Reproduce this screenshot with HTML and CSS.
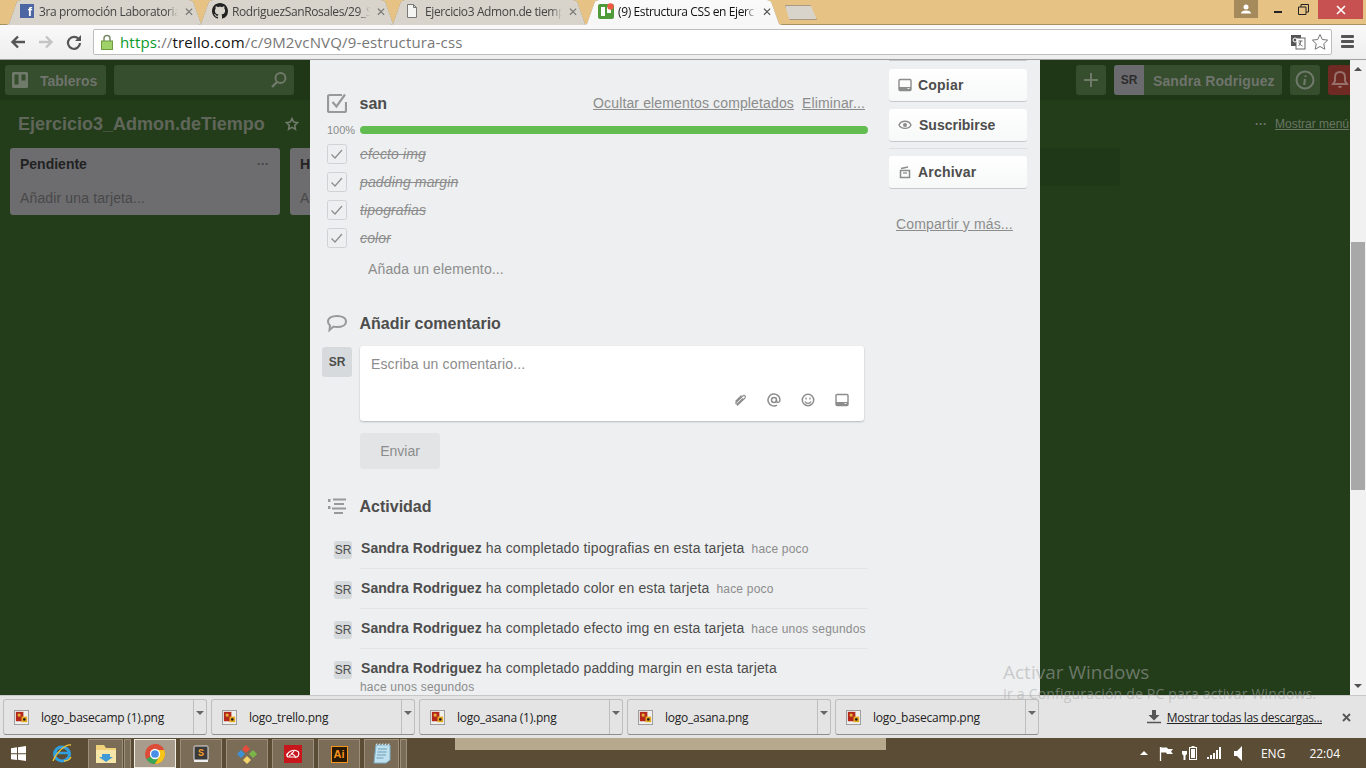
FILE: index.html
```html
<!DOCTYPE html>
<html lang="es">
<head>
<meta charset="utf-8">
<title>(9) Estructura CSS en Ejercicio3</title>
<link rel="stylesheet" href="styles.css">
</head>
<body>
<svg class="defs" width="0" height="0" aria-hidden="true">
  <symbol id="png" viewBox="0 0 16 16">
    <rect x=".5" y=".5" width="15" height="15" fill="#f0f0ec" stroke="#9a9a9a"/>
    <rect x="2" y="2" width="8" height="10" fill="#b3261a"/>
    <rect x="4" y="4" width="3" height="3" fill="#e8b23a"/>
    <rect x="8" y="7" width="6" height="6" fill="#e5a81e"/>
    <circle cx="11" cy="10" r="1.4" fill="#222"/>
  </symbol>
  <symbol id="card-icon" viewBox="0 0 14 14">
    <path d="M2 1.500h10a1 1 0 0 1 1 1v9a1 1 0 0 1-1 1H2a1 1 0 0 1-1-1v-9a1 1 0 0 1 1-1z" fill="none" stroke="#8c8c8c" stroke-width="1.400"/>
    <path d="M1 9h12v3H1z" fill="#8c8c8c"/>
    <path d="M9.500 10.500h2" stroke="#edeff0"/>
  </symbol>
  <symbol id="tick" viewBox="0 0 20 20">
    <rect x=".5" y=".5" width="19" height="19" rx="2" fill="#edeff0" stroke="#d0d3d6"/>
    <path d="M4.500 10.500l3.500 3.500 7-8" fill="none" stroke="#8c8c8c" stroke-width="1.200"/>
  </symbol>
</svg>

<header class="tabstrip">
  <div class="tab tab-fb">
    <span class="fb-logo">f</span>
    <span class="tab-title">3ra promoción Laboratoria</span>
    <span class="tab-x">✕</span>
  </div>
  <div class="tab tab-gh">
    <svg class="fav" viewBox="0 0 16 16"><path fill="#222" d="M8 0C3.580 0 0 3.580 0 8c0 3.540 2.290 6.530 5.470 7.590.4.070.55-.17.55-.38 0-.19-.01-.82-.01-1.490-2.010.37-2.530-.49-2.690-.94-.09-.23-.48-.94-.82-1.130-.28-.15-.68-.52-.01-.53.63-.01 1.080.58 1.230.82.720 1.210 1.870.87 2.330.66.070-.52.280-.87.510-1.070-1.780-.2-3.640-.89-3.640-3.950 0-.87.310-1.590.820-2.150-.08-.2-.36-1.020.080-2.120 0 0 .670-.21 2.200.82.640-.18 1.320-.27 2-.27.680 0 1.360.09 2 .27 1.530-1.040 2.200-.82 2.200-.82.440 1.100.160 1.920.080 2.120.510.560.820 1.270.820 2.150 0 3.070-1.870 3.750-3.650 3.950.290.25.540.73.540 1.480 0 1.070-.01 1.930-.01 2.200 0 .21.150.46.550.38A8.013 8.013 0 0 0 16 8c0-4.420-3.580-8-8-8z"/></svg>
    <span class="tab-title">RodriguezSanRosales/29_S</span>
    <span class="tab-x">✕</span>
  </div>
  <div class="tab tab-doc">
    <svg class="fav" viewBox="0 0 16 16"><path d="M3.500 1.500h6l3 3v10h-9z M9.500 1.500v3h3" fill="#f4f4f2" stroke="#777"/></svg>
    <span class="tab-title">Ejercicio3 Admon.de tiemp</span>
    <span class="tab-x">✕</span>
  </div>
  <div class="tab tab-active">
    <svg class="fav" viewBox="0 0 16 16"><rect y="1" width="16" height="15" rx="2" fill="#4f9a3a"/><rect x="3" y="4" width="4" height="9" fill="#fff"/><rect x="9" y="4" width="4" height="6" fill="#fff"/><circle cx="12.500" cy="3.500" r="3.200" fill="#ee5a44"/></svg>
    <span class="tab-title">(9) Estructura CSS en Ejerc</span>
    <span class="tab-x">✕</span>
  </div>
  <div class="new-tab"></div>
  <div class="win-controls">
    <div class="win-user"><svg width="10" height="10" viewBox="0 0 10 10"><circle cx="5" cy="3" r="2.500" fill="#fff"/><path d="M0 9.500c0-2 2-3 5-3s5 1 5 3z" fill="#fff"/></svg></div>
    <div class="win-min"><span class="min-bar"></span></div>
    <div class="win-max"><svg width="11" height="11" viewBox="0 0 11 11"><path d="M.5 3h7.500v7.500H.5zM3 3V.5h7.500V8H8" fill="none" stroke="#222"/></svg></div>
    <div class="win-close"><svg width="10" height="10" viewBox="0 0 10 10"><path d="M1 1l8 8M9 1l-8 8" stroke="#fff" stroke-width="1.600"/></svg></div>
  </div>
</header>

<nav class="toolbar">
  <svg class="nav-ic" viewBox="0 0 16 16"><path d="M15 8H3M8 2.500L2.500 8 8 13.500" fill="none" stroke="#555" stroke-width="2.400"/></svg>
  <svg class="nav-ic" viewBox="0 0 16 16"><path d="M1 8h12M8 2.500L13.500 8 8 13.500" fill="none" stroke="#c4c4c4" stroke-width="2.400"/></svg>
  <svg class="nav-ic" viewBox="0 0 16 16"><path d="M13 5.500A6 6 0 1 0 14 9" fill="none" stroke="#555" stroke-width="2.200"/><path d="M15 1v6H9z" fill="#555"/></svg>
  <div class="omnibox">
    <svg class="lock" viewBox="0 0 12 16"><path d="M3 7V4.500a3 3 0 0 1 6 0V7" fill="none" stroke="#7a8a6a" stroke-width="1.500"/><rect x=".5" y="7" width="11" height="8.500" fill="#9fd36a" stroke="#6f9a3f"/></svg>
    <span class="url"><span class="url-https">https</span><span class="url-rest">://</span><span class="url-host">trello.com</span><span class="url-rest">/c/9M2vcNVQ/9-estructura-css</span></span>
    <svg class="translate" viewBox="0 0 16 16"><rect x="1" y="1" width="10" height="11" fill="#555"/><rect x="6" y="4" width="9" height="11" fill="#fff" stroke="#666"/><path d="M8.500 7h4M10.500 7c0 3-1 4-2 5M9 8.500c.5 2 2 3 3.500 3.500" fill="none" stroke="#666"/><circle cx="5" cy="6" r="2" fill="none" stroke="#fff"/></svg>
    <svg class="star" viewBox="0 0 18 18"><path d="M9 1.500l2.300 5 5.400.6-4 3.700 1.100 5.400L9 13.500l-4.800 2.700 1.100-5.400-4-3.700 5.400-.6z" fill="#fff" stroke="#777"/></svg>
  </div>
  <div class="hamburger"><span></span><span></span><span></span></div>
</nav>

<main class="viewport">
  <div class="board">
    <div class="board-head">
      <div class="hbtn hbtn-boards">
        <svg width="16" height="16" viewBox="0 0 16 16"><path fill="#6f7a6a" fill-rule="evenodd" d="M1.500 0h13A1.500 1.500 0 0 1 16 1.500v13a1.500 1.500 0 0 1-1.500 1.500h-13A1.500 1.500 0 0 1 0 14.500v-13A1.500 1.500 0 0 1 1.500 0zM2.500 2.500v10h4v-10zM9.500 2.500v6h4v-6z"/></svg>
        <span class="htext">Tableros</span>
      </div>
      <div class="hsearch">
        <svg width="16" height="16" viewBox="0 0 16 16"><circle cx="9.500" cy="6" r="5" fill="none" stroke="#6f7a6a" stroke-width="2"/><path d="M6 10l-5 5" stroke="#6f7a6a" stroke-width="2.400"/></svg>
      </div>
      <div class="head-spacer"></div>
      <div class="hbtn hbtn-sq">
        <svg width="16" height="16" viewBox="0 0 16 16"><path d="M8 1v14M1 8h14" stroke="#6f7a6a" stroke-width="2"/></svg>
      </div>
      <div class="hbtn hbtn-user"><span class="huser-av">SR</span><span class="huser-name htext">Sandra Rodriguez</span></div>
      <div class="hbtn hbtn-sq">
        <svg width="20" height="20" viewBox="0 0 20 20"><circle cx="10" cy="10" r="8.500" fill="none" stroke="#6f7a6a" stroke-width="2"/><path d="M10.500 5.500v1.500M10 9l-.8 6" stroke="#6f7a6a" stroke-width="2.200"/></svg>
      </div>
      <div class="hbtn hbtn-bell">
        <svg width="20" height="20" viewBox="0 0 20 20"><path d="M10 2c-3 0-5 2-5 5v4l-2 3h14l-2-3V7c0-3-2-5-5-5z" fill="none" stroke="#98706a" stroke-width="2"/><path d="M8 16a2 2 0 0 0 4 0" fill="#98706a"/></svg>
      </div>
    </div>
    <div class="board-title-row">
      <span class="board-name">Ejercicio3_Admon.deTiempo</span>
      <svg class="board-star" width="14" height="14" viewBox="0 0 14 14"><path d="M7 1.500l1.700 3.600 3.800.5-2.800 2.700.7 3.900L7 10.400l-3.400 1.800.7-3.900L1.500 5.600l3.800-.5z" fill="none" stroke="#6f7a6a" stroke-width="1.600"/></svg>
      <div class="head-spacer"></div>
      <span class="menu-dots">···</span>
      <span class="menu-link">Mostrar menú</span>
    </div>
    <div class="lists">
      <section class="list">
        <div class="list-head"><span class="list-name">Pendiente</span><span class="list-dots">···</span></div>
        <div class="list-add">Añadir una tarjeta...</div>
      </section>
      <section class="list">
        <div class="list-head"><span class="list-name">H</span></div>
        <div class="list-add">A</div>
      </section>
      <section class="list"></section>
      <div class="list-new"></div>
    </div>
  </div>

  <div class="modal">
    <div class="modal-main">
      <div class="sec-head">
        <svg class="sec-ic" viewBox="0 0 20 20"><path d="M15 2H2.500A1.500 1.500 0 0 0 1 3.500v14A1.500 1.500 0 0 0 2.500 19h15a1.500 1.500 0 0 0 1.500-1.500V9" fill="none" stroke="#999" stroke-width="2.200"/><path d="M5.500 9l4 4.500L18 1.500" fill="none" stroke="#999" stroke-width="2.200"/></svg>
        <h3 class="sec-title">san</h3>
        <a class="head-link first-link">Ocultar elementos completados</a>
        <a class="head-link">Eliminar...</a>
      </div>
      <div class="progress">
        <span class="pct">100%</span>
        <div class="bar"></div>
      </div>
      <ul class="items">
        <li class="item"><svg class="tick"><use href="#tick"/></svg><span class="item-text">efecto img</span></li>
        <li class="item"><svg class="tick"><use href="#tick"/></svg><span class="item-text">padding margin</span></li>
        <li class="item"><svg class="tick"><use href="#tick"/></svg><span class="item-text">tipografias</span></li>
        <li class="item"><svg class="tick"><use href="#tick"/></svg><span class="item-text">color</span></li>
      </ul>
      <div class="add-item">Añada un elemento...</div>

      <div class="sec-head sec-comment">
        <svg class="sec-ic" viewBox="0 0 20 20"><path d="M10 3c5 0 9 2 9 5.500S15 14 10 14c-1.300 0-2.500-.1-3.500-.4L2.500 17l.5-4.500C1.700 11.500 1 10 1 8.500 1 5 5 3 10 3z" fill="none" stroke="#999" stroke-width="2"/></svg>
        <h3 class="sec-title">Añadir comentario</h3>
      </div>
      <div class="comment-row">
        <div class="avatar-lg">SR</div>
        <div class="comment-box">
          <div class="placeholder">Escriba un comentario...</div>
          <div class="comment-tools">
            <svg class="tool" viewBox="0 0 14 14"><path d="M4 12.500L12 5c1.200-1.300-.5-3.400-2-2.200L3 9.500c-.8.800.3 2 1.200 1.300L10 5.500M2.500 8.500L8.500 2.500" fill="none" stroke="#8c8c8c" stroke-width="1.100"/></svg>
            <svg class="tool" viewBox="0 0 14 14"><circle cx="7" cy="7" r="2.500" fill="none" stroke="#8c8c8c" stroke-width="1.500"/><path d="M9.500 7v1c0 2 3.500 2 3.500-1a6 6 0 1 0-3 5.200" fill="none" stroke="#8c8c8c" stroke-width="1.500"/></svg>
            <svg class="tool" viewBox="0 0 14 14"><circle cx="7" cy="7" r="5.700" fill="none" stroke="#8c8c8c" stroke-width="1.500"/><path d="M5 4.500v2M9 4.500v2" stroke="#8c8c8c" stroke-width="1.300"/><path d="M4 8.500c1 2.500 5 2.500 6 0" fill="none" stroke="#8c8c8c" stroke-width="1.300"/></svg>
            <svg class="tool" viewBox="0 0 14 14"><use href="#card-icon"/></svg>
          </div>
        </div>
      </div>
      <button class="send" type="button">Enviar</button>

      <div class="sec-head sec-activity">
        <svg class="sec-ic" viewBox="0 0 20 20"><path d="M6 3.500h13M7 8h10M5 12.500h14M7 17h9" stroke="#999" stroke-width="2"/><path d="M1 4.500h2.500M1 11.500h2.500" stroke="#999" stroke-width="3"/></svg>
        <h3 class="sec-title">Actividad</h3>
      </div>
      <div class="activity">
        <div class="act">
          <div class="avatar-sm">SR</div>
          <div class="act-body"><b>Sandra Rodriguez</b> ha completado tipografias en esta tarjeta <span class="when">hace poco</span></div>
        </div>
        <div class="act">
          <div class="avatar-sm">SR</div>
          <div class="act-body"><b>Sandra Rodriguez</b> ha completado color en esta tarjeta <span class="when">hace poco</span></div>
        </div>
        <div class="act">
          <div class="avatar-sm">SR</div>
          <div class="act-body"><b>Sandra Rodriguez</b> ha completado efecto img en esta tarjeta <span class="when">hace unos segundos</span></div>
        </div>
        <div class="act">
          <div class="avatar-sm">SR</div>
          <div class="act-body act-last"><b>Sandra Rodriguez</b> ha completado padding margin en esta tarjeta <span class="when when-block">hace unos segundos</span></div>
        </div>
      </div>
    </div>
    <aside class="modal-side">
      <div class="side-sliver"></div>
      <div class="side-btn"><svg class="side-ic"><use href="#card-icon"/></svg><span>Copiar</span></div>
      <div class="side-btn"><svg class="side-ic" viewBox="0 0 14 14"><path d="M1 7c2-5 10-5 12 0-2 4.500-10 4.500-12 0z" fill="none" stroke="#8c8c8c" stroke-width="1.300"/><circle cx="7" cy="7" r="2" fill="#8c8c8c"/></svg><span class="side-sub">Suscribirse</span></div>
      <div class="side-rule"></div>
      <div class="side-btn"><svg class="side-ic" viewBox="0 0 14 14"><path d="M2.500 5.500h9v7h-9z" fill="none" stroke="#8c8c8c" stroke-width="1.500"/><path d="M3 3.500L10 2" stroke="#8c8c8c" stroke-width="1.300"/><path d="M5 8h4" stroke="#8c8c8c" stroke-width="1.300"/></svg><span>Archivar</span></div>
      <a class="side-link">Compartir y más...</a>
    </aside>
  </div>

  <div class="scrollbar">
    <span class="arrow-up"></span>
    <span class="thumb"></span>
    <span class="arrow-down"></span>
  </div>
</main>

<section class="downloads">
  <div class="dl"><svg class="dl-ic"><use href="#png"/></svg><span class="dl-name">logo_basecamp (1).png</span><span class="dl-caret"></span></div>
  <div class="dl"><svg class="dl-ic"><use href="#png"/></svg><span class="dl-name">logo_trello.png</span><span class="dl-caret"></span></div>
  <div class="dl"><svg class="dl-ic"><use href="#png"/></svg><span class="dl-name">logo_asana (1).png</span><span class="dl-caret"></span></div>
  <div class="dl"><svg class="dl-ic"><use href="#png"/></svg><span class="dl-name">logo_asana.png</span><span class="dl-caret"></span></div>
  <div class="dl"><svg class="dl-ic"><use href="#png"/></svg><span class="dl-name">logo_basecamp.png</span><span class="dl-caret"></span></div>
  <div class="dl-right">
    <svg width="14" height="14" viewBox="0 0 14 14"><path d="M5 0h4v5h3.500L7 10.500 1.500 5H5z" fill="#555"/><path d="M0 12.500h14" stroke="#555" stroke-width="1.500"/></svg>
    <a class="dl-all">Mostrar todas las descargas...</a>
    <svg class="dl-close" width="9" height="9" viewBox="0 0 9 9"><path d="M1 1l7 7M8 1L1 8" stroke="#555" stroke-width="1.800"/></svg>
  </div>
</section>

<footer class="taskbar">
  <div class="peek"></div>
  <div class="start"><svg width="15" height="15" viewBox="0 0 15 15"><path d="M0 2.200l6-.9v5.900H0zM7 1.200L15 0v7.200H7zM0 8.200h6v5.900l-6-.9zM7 8.200h8V15l-8-1.200z" fill="#fff"/></svg></div>
  <div class="tb-ie"><svg width="24" height="24" viewBox="0 0 24 24"><ellipse cx="12" cy="13" rx="7.500" ry="7" fill="none" stroke="#2f9fe0" stroke-width="3"/><path d="M6 12h13" stroke="#2f9fe0" stroke-width="2.500"/><path d="M3 20c3-8 12-17 18-16M14 20c4 0 6-2 7-4" fill="none" stroke="#f2c230" stroke-width="1.300"/></svg></div>
  <div class="tb-btn tb-split">
    <svg width="24" height="22" viewBox="0 0 24 22"><path d="M2 2h8l2 3h10v15H2z" fill="#f0d27a"/><path d="M2 7h20v13H2z" fill="#f7e6a8"/><path d="M8 11h8v3h3l-7 5-7-5h3z" fill="#3f9bd5"/></svg>
  </div>
  <div class="tb-grip"></div>
  <div class="tb-btn tb-on">
    <svg width="22" height="22" viewBox="0 0 22 22"><circle cx="11" cy="11" r="10" fill="#dd4b39"/><path d="M11 11L2.300 16A10 10 0 0 0 11 21l4-7z" fill="#3aa757"/><path d="M11 1a10 10 0 0 1 9 5.500h-9z" fill="#dd4b39"/><path d="M20.200 7H11l4 7-4 7a10 10 0 0 0 9.200-14z" fill="#f5c518"/><circle cx="11" cy="11" r="4.500" fill="#4a8ee8" stroke="#fff" stroke-width="1.300"/></svg>
  </div>
  <div class="tb-btn">
    <svg width="16" height="18" viewBox="0 0 16 18"><rect x="1" y="1" width="14" height="14" rx="1" fill="#3a3a3a" stroke="#ddd"/><rect x="1" y="15" width="14" height="2" fill="#eee"/><text x="8" y="11" class="tb-s">S</text></svg>
  </div>
  <div class="tb-btn">
    <svg width="22" height="22" viewBox="0 0 22 22"><path d="M7 2l4 4-4 4-4-4z" fill="#e74c3c" transform="translate(3 0)"/><path d="M18 7l4 4-4 4-4-4z" fill="#7ab648" transform="translate(-1 0)"/><path d="M6 7l4 4-4 4-4-4z" fill="#3f8fd5" transform="translate(-1 0)"/><path d="M11 13l4 4-4 4-4-4z" fill="#f1d36b"/></svg>
  </div>
  <div class="tb-btn">
    <svg width="22" height="22" viewBox="0 0 22 22"><rect x="2" y="2" width="18" height="18" fill="#c8161d"/><path d="M5 13c0-4 6-7 10-5 3 1 2 6-1 6H7c-3 0-3-4 0-4M9 10c2 1 4 2 5 5M12 8c-1 2-3 4-5 5" fill="none" stroke="#fff" stroke-width="1.100"/></svg>
  </div>
  <div class="tb-btn">
    <div class="ai-ic">Ai</div>
  </div>
  <div class="tb-btn tb-split">
    <svg width="20" height="22" viewBox="0 0 20 22"><path d="M4 2h14v15l-4 3H2z" fill="#bfe0ee" stroke="#7fb2c9"/><path d="M6 6h9M5.500 9h9M5 12h9M4.500 15h7" stroke="#6d9db5"/><path d="M4 2l1-1.500M7 2l1-1.500M10 2l1-1.500M13 2l1-1.500M16 2l1-1.500" stroke="#eee"/></svg>
  </div>
  <div class="tb-grip"></div>
  <div class="head-spacer"></div>
  <div class="tray">
    <span class="tray-up"></span>
    <svg class="tray-flag" width="15" height="15" viewBox="0 0 15 15"><path d="M1.500 1v14" stroke="#fff" stroke-width="1.300"/><path d="M2 1.500h6l1 1.500h5l-2 2.500 2 2.500H8L7 6.500H2z" fill="#fff"/></svg>
    <svg width="15" height="16" viewBox="0 0 15 16"><path d="M1 3v3M4 3v3M0 6h5v3l-1.500 1.500V15H1.500v-4.500L0 9z" fill="#fff"/><rect x="7.500" y="2.500" width="7" height="12" fill="none" stroke="#fff"/><rect x="9" y="4" width="4" height="9" fill="#fff"/><rect x="9.500" y="1" width="3" height="1.500" fill="#fff"/></svg>
    <svg width="15" height="12" viewBox="0 0 15 12"><path d="M0 10h2v2H0zM3 8h2v4H3zM6 6h2v6H6zM9 3h2v9H9zM12 0h2v12h-2z" fill="#fff"/></svg>
    <svg class="tray-vol" width="9" height="15" viewBox="0 0 9 15"><path d="M0 5h3l5-5v15l-5-5H0z" fill="#fff"/></svg>
    <span class="tray-lang">ENG</span>
    <span class="tray-time">22:04</span>
  </div>
</footer>

<div class="activate">
  <div class="activate-a">Activar Windows</div>
  <div class="activate-b">Ir a Configuración de PC para activar Windows.</div>
</div>
</body>
</html>
```
FILE: styles.css
```css
* { box-sizing: border-box; }
html, body { margin: 0; padding: 0; }
body {
  width: 1366px;
  height: 768px;
  overflow: hidden;
  display: flex;
  flex-direction: column;
  font-family: "Liberation Sans", Arial, sans-serif;
  position: relative;
  background: #223c1a;
}
.defs { position: absolute; }
svg { display: block; flex: none; }
ul, h3 { margin: 0; padding: 0; list-style: none; }

/* Browser tab strip */
.tabstrip {
  height: 25px;
  flex: none;
  display: flex;
  background: #e6c384;
  border-bottom: 1px solid #a89063;
  padding-left: 6px;
  font-family: "Open Sans", "Noto Sans", sans-serif;
  font-size: 12px;
  color: #444;
}
.tab {
  position: relative;
  height: 25px;
  width: 198px;
  margin-right: -6px;
  display: flex;
  align-items: center;
  padding: 0 0 3px 14px;
  filter: drop-shadow(0 0 .6px #8c7f68);
}
.tab::before {
  content: "";
  position: absolute;
  inset: 0;
  z-index: -1;
  background: #d8d4cc;
  clip-path: polygon(0 100%, 3px 96%, 11px 6%, 15px 0, calc(100% - 15px) 0, calc(100% - 11px) 6%, calc(100% - 3px) 96%, 100% 100%);
}
.tab-active { color: #111; z-index: 2; margin-left: 2px; }
.tab-active::before { background: linear-gradient(#fafafa, #f6f6f6); }
.fb-logo {
  width: 14px;
  height: 14px;
  flex: none;
  background: #4c66a4;
  color: #fff;
  font: bold 13px/15px "Liberation Sans", sans-serif;
  text-align: right;
  padding-right: 2px;
}
.fav { width: 16px; height: 16px; }
.tab-title {
  margin-left: 4px;
  flex: 1;
  min-width: 0;
  white-space: nowrap;
  letter-spacing: -.38px;
  -webkit-mask-image: linear-gradient(to right, #000 92%, transparent);
  mask-image: linear-gradient(to right, #000 92%, transparent);
}
.fb-logo + .tab-title { margin-left: 5px; }
.tab-doc .tab-title { margin-left: 5px; }
.tab-x { width: 12px; margin: 0 8px 0 6px; font-size: 12px; color: #777; flex: none; }
.tab-active .tab-x { color: #555; }
.new-tab {
  width: 32px;
  height: 15px;
  margin: 5px 0 0 9px;
  background: #d8d4cc;
  border: 1px solid #a89a80;
  clip-path: polygon(0 0, 80% 0, 100% 100%, 14% 100%);
}
.win-controls { margin-left: auto; display: flex; align-items: flex-start; }
.win-user { width: 24px; height: 18px; background: #a58a5c; display: flex; align-items: center; justify-content: center; margin-right: 7px; }
.win-min { width: 25px; height: 19px; display: flex; align-items: center; justify-content: center; padding-top: 4px; }
.min-bar { width: 8px; height: 2px; background: #222; }
.win-max { width: 26px; height: 19px; display: flex; align-items: center; justify-content: center; }
.win-close { width: 45px; height: 19px; background: #c75050; display: flex; align-items: center; justify-content: center; margin: 0 3px 0 2px; }

/* Browser toolbar */
.toolbar {
  height: 35px;
  flex: none;
  display: flex;
  align-items: center;
  gap: 7px;
  padding: 0 10px 1px 10px;
  background: linear-gradient(#f9f9f9, #eeeeee);
  border-bottom: 1px solid #a0a0a0;
}
.nav-ic { width: 16px; height: 16px; margin-right: 5px; }
.omnibox {
  height: 26px;
  width: 1239px;
  margin-left: -1px;
  display: flex;
  align-items: center;
  background: #fff;
  border: 1px solid #bdbdbd;
  border-radius: 2px;
  padding-left: 7px;
}
.lock { width: 12px; height: 16px; }
.url { font: 15px "Open Sans", "Noto Sans", sans-serif; letter-spacing: .17px; margin-left: 7px; flex: 1; white-space: nowrap; }
.url-https { color: #0a9a2a; }
.url-rest { color: #777; }
.url-host { color: #111; }
.translate { width: 16px; height: 16px; margin-right: 5px; }
.star { width: 18px; height: 18px; margin-right: 2px; }
.hamburger { margin-left: 2px; display: flex; flex-direction: column; gap: 2px; width: 13px; }
.hamburger span { height: 3px; background: #555; border-radius: 1px; }

/* Page viewport */
.viewport { height: 635px; flex: none; position: relative; overflow: hidden; }
.board { width: 1350px; height: 635px; overflow: hidden; background: #233d1a; }
.board-head {
  height: 40px;
  background: #1f3717;
  display: flex;
  align-items: center;
  padding: 0 0 0 5px;
  gap: 8px;
  overflow: hidden;
}
.head-spacer { flex: 1; }
.hbtn {
  height: 30px;
  background: #364d2e;
  border-radius: 3px;
  display: flex;
  align-items: center;
  color: #6f746c;
  font-weight: bold;
  font-size: 14px;
  flex: none;
}
.htext { padding-top: 2px; }
.hbtn-boards { width: 101px; padding-left: 7px; gap: 12px; }
.hsearch {
  width: 180px;
  height: 30px;
  background: #364d2e;
  border-radius: 3px;
  display: flex;
  align-items: center;
  justify-content: flex-end;
  padding-right: 7px;
}
.hbtn-sq { width: 30px; justify-content: center; }
.hbtn-user { width: 168px; overflow: hidden; }
.huser-av {
  width: 30px;
  height: 30px;
  background: #6b6b6f;
  color: #2d2d2d;
  font-size: 12px;
  text-align: center;
  line-height: 30px;
  flex: none;
}
.huser-name { margin-left: 9px; white-space: nowrap; letter-spacing: .12px; }
.hbtn-bell { width: 22px; background: #6f2a24; border-radius: 3px 0 0 3px; padding-left: 2px; }
.board-title-row {
  height: 48px;
  display: flex;
  align-items: center;
  padding: 0 0 0 18px;
  color: #6a7565;
  overflow: hidden;
}
.board-name { font-weight: bold; font-size: 18px; color: #60665a; }
.board-star { margin-left: 20px; }
.menu-dots { font-size: 12px; font-weight: bold; margin-right: 8px; }
.menu-link { font-size: 12px; text-decoration: underline; white-space: nowrap; width: 75px; overflow: hidden; }
.lists { display: flex; gap: 10px; padding-left: 10px; align-items: flex-start; }
.list {
  width: 270px;
  height: 67px;
  flex: none;
  background: #6d6d70;
  border-radius: 3px;
  padding: 8px 10px;
}
.list-head { display: flex; justify-content: space-between; align-items: center; height: 16px; }
.list-name { font-weight: bold; font-size: 14px; color: #222; }
.list-dots { font-size: 12px; font-weight: bold; color: #444; margin-right: 1px; }
.list-add { margin-top: 18px; font-size: 14px; color: #484848; line-height: 16px; letter-spacing: .14px; }
.list-new { width: 270px; height: 38px; flex: none; background: #1f3817; border-radius: 3px; }

/* Card modal */
.modal {
  position: absolute;
  left: 310px;
  top: 0;
  width: 730px;
  height: 635px;
  background: #edeff0;
  display: flex;
  overflow: hidden;
  color: #4d4d4d;
  letter-spacing: .14px;
}
.modal-main { width: 558px; flex: none; padding: 33px 0 0 17px; }
.sec-head { display: flex; align-items: center; height: 20px; gap: 13px; }
.sec-ic { width: 20px; height: 20px; }
.sec-title { font-size: 16px; font-weight: bold; color: #4d4d4d; flex: none; letter-spacing: 0; padding-top: 2px; margin-left: -.5px; }
.head-link { font-size: 14px; color: #8c8c8c; text-decoration: underline; margin-right: -5px; white-space: nowrap; }
.first-link { margin-left: auto; }
.head-link:last-child { margin-right: 3px; }
.progress { display: flex; align-items: center; height: 12px; margin-top: 11px; }
.pct { width: 33px; font-size: 11px; color: #8c8c8c; letter-spacing: 0; }
.bar { flex: 1; height: 8px; border-radius: 4px; background: #61bd4f; }
.items { margin-top: 8px; display: flex; flex-direction: column; gap: 8px; }
.item { display: flex; align-items: center; height: 20px; gap: 13px; }
.tick { width: 20px; height: 20px; }
.item-text { font-size: 14px; font-style: italic; color: #8c8c8c; text-decoration: line-through; }
.add-item { margin-top: 11px; padding-left: 41px; font-size: 14px; line-height: 20px; color: #8c8c8c; }
.sec-comment { margin-top: 34px; }
.comment-row { display: flex; margin: 13px 0 0 -5px; gap: 8px; }
.avatar-lg {
  width: 30px;
  height: 30px;
  margin-top: 1px;
  border-radius: 3px;
  background: #d6dadc;
  text-align: center;
  font-weight: bold;
  font-size: 12px;
  line-height: 30px;
  color: #4d4d4d;
  letter-spacing: 0;
}
.comment-box {
  width: 504px;
  height: 75px;
  background: #fff;
  border-radius: 3px;
  box-shadow: 0 1px 2px rgba(0, 0, 0, .23);
  padding: 10px 11px;
  display: flex;
  flex-direction: column;
  justify-content: space-between;
}
.placeholder { font-size: 14px; line-height: 16px; color: #8c8c8c; }
.comment-tools { display: flex; justify-content: flex-end; gap: 20px; margin-right: 4px; margin-bottom: 4px; }
.tool { width: 14px; height: 14px; }
.send {
  display: block;
  width: 80px;
  height: 36px;
  margin: 12px 0 0 33px;
  border: 0;
  border-radius: 3px;
  background: #e2e4e6;
  font: 14px "Liberation Sans", sans-serif;
  color: #8c8c8c;
}
.sec-activity { margin-top: 27px; }
.activity { margin-top: 13px; }
.act { display: flex; gap: 8px; padding-left: 7px; }
.avatar-sm {
  width: 18px;
  height: 18px;
  margin-top: 12px;
  border-radius: 3px;
  background: #d6dadc;
  text-align: center;
  font-size: 12px;
  line-height: 19px;
  color: #4d4d4d;
  letter-spacing: 0;
  flex: none;
}
.act-body {
  flex: 1;
  height: 40px;
  padding: 9px 0 0 1px;
  border-bottom: 1px solid #e2e4e6;
  font-size: 14px;
  line-height: 20px;
  color: #4d4d4d;
  white-space: nowrap;
}
.act-body b { letter-spacing: .06px; }
.act-last { height: 60px; border-bottom: 0; }
.when { font-size: 12px; color: #8c8c8c; margin-left: 3px; letter-spacing: .2px; }
.when-block { display: block; margin: 0 0 0 -1px; line-height: 18px; }
.modal-side { width: 139px; margin-left: 21px; flex: none; display: flex; flex-direction: column; }
.side-sliver { height: 1px; background: #c4c9cc; margin-bottom: 8px; width: 138px; flex: none; }
.side-btn {
  width: 138px;
  height: 32px;
  margin-bottom: 8px;
  flex: none;
  display: flex;
  align-items: center;
  gap: 6px;
  padding-left: 9px;
  background: linear-gradient(#ffffff, #f7f8f8);
  border-radius: 3px;
  box-shadow: 0 1px 0 #c4c9cc;
  font-size: 14px;
  font-weight: bold;
  color: #4d4d4d;
  letter-spacing: .2px;
}
.side-ic { width: 14px; height: 14px; }
.side-sub { margin-left: 1px; letter-spacing: 0; }
.side-rule { height: 1px; margin: -1px 0 7px; background: #dcdfe1; flex: none; }
.side-link { margin: 18px 0 0 7px; font-size: 14px; line-height: 20px; color: #8c8c8c; text-decoration: underline; white-space: nowrap; }

/* Page scrollbar */
.scrollbar { position: absolute; right: 0; top: 0; width: 16px; height: 635px; background: #f1f1f1; }
.thumb { position: absolute; left: 1px; top: 182px; width: 14px; height: 248px; background: #a8a8a8; }
.arrow-up, .arrow-down { position: absolute; left: 4px; width: 0; height: 0; border-left: 4px solid transparent; border-right: 4px solid transparent; }
.arrow-up { top: 7px; border-bottom: 4px solid #505050; }
.arrow-down { bottom: 7px; border-top: 4px solid #505050; }

/* Downloads shelf */
.downloads {
  height: 43px;
  flex: none;
  display: flex;
  gap: 4px;
  padding: 3px 0 0 3px;
  background: #e4e4e4;
  border-top: 1px solid #c8c8c8;
  font-family: "Open Sans", "Noto Sans", sans-serif;
  font-size: 12px;
  color: #222;
  position: relative;
  z-index: 1;
}
.dl {
  width: 204px;
  height: 36px;
  flex: none;
  display: flex;
  align-items: center;
  border: 1px solid #bdbdbd;
  border-bottom-color: #8e8e8e;
  border-radius: 3px;
  padding-left: 10px;
}
.dl-ic { width: 15px; height: 15px; }
.dl-name { flex: 1; margin-left: 12px; white-space: nowrap; letter-spacing: -.24px; }
.dl-caret {
  width: 13px;
  height: 34px;
  flex: none;
  border-left: 1px solid #bdbdbd;
  position: relative;
}
.dl-caret::after {
  content: "";
  position: absolute;
  left: 2px;
  top: 11px;
  border-left: 4px solid transparent;
  border-right: 4px solid transparent;
  border-top: 4px solid #666;
}
.dl-right { margin-left: auto; display: flex; align-items: center; height: 36px; padding-right: 15px; }
.dl-all { margin-left: 6px; color: #222; text-decoration: underline; white-space: nowrap; font-size: 12px; letter-spacing: -.36px; }
.dl-close { margin-left: 20px; }

/* Windows taskbar */
.taskbar {
  height: 30px;
  flex: none;
  display: flex;
  align-items: center;
  background: #5a4c35;
  position: relative;
}
.peek { position: absolute; left: 455px; top: 0; width: 431px; height: 12px; background: #b7a98d; }
.start { width: 36px; display: flex; justify-content: center; }
.tb-ie { width: 52px; display: flex; justify-content: center; }
.tb-btn {
  width: 42px;
  height: 29px;
  margin: 1px 4px 0 0;
  flex: none;
  display: flex;
  align-items: center;
  justify-content: center;
  background: #7a6c57;
  border: 1px solid #9b907e;
  border-bottom: 0;
}
.tb-split { width: 35px; margin-right: 1px; }
.tb-grip { width: 7px; height: 29px; margin: 1px 3px 0 0; background: #7a6c57; border: 1px solid #9b907e; border-bottom: 0; }
.tb-on { background: #a89d8c; border: 1px solid #f0ece4; }
.tb-s { font: bold 10px "Liberation Mono", monospace; fill: #f09a2a; text-anchor: middle; }
.ai-ic {
  width: 17px;
  height: 17px;
  background: #2a1a05;
  border: 1px solid #f7941e;
  color: #f7941e;
  font: bold 11px/15px "Liberation Sans", sans-serif;
  text-align: center;
}
.tray { display: flex; align-items: center; color: #fff; font: 12px "Open Sans", "Noto Sans", sans-serif; padding-right: 26px; }
.tray-up { width: 0; height: 0; border-left: 4px solid transparent; border-right: 4px solid transparent; border-bottom: 4px solid #fff; margin-right: 11px; }
.tray svg { margin-right: 10px; }
.tray svg.tray-flag { margin-right: 8px; }
.tray svg.tray-vol { margin: 0 18px 0 2px; }
.tray-lang { margin-right: 24px; }

/* Activation watermark */
.activate {
  position: absolute;
  left: 1003px;
  top: 659px;
  z-index: 5;
  white-space: nowrap;
  font-family: "Open Sans", "Noto Sans", sans-serif;
  color: rgba(170, 170, 170, .55);
  pointer-events: none;
}
.activate-a { font-size: 19px; line-height: 26px; }
.activate-b { font-size: 14px; line-height: 18px; letter-spacing: .2px; }
```
